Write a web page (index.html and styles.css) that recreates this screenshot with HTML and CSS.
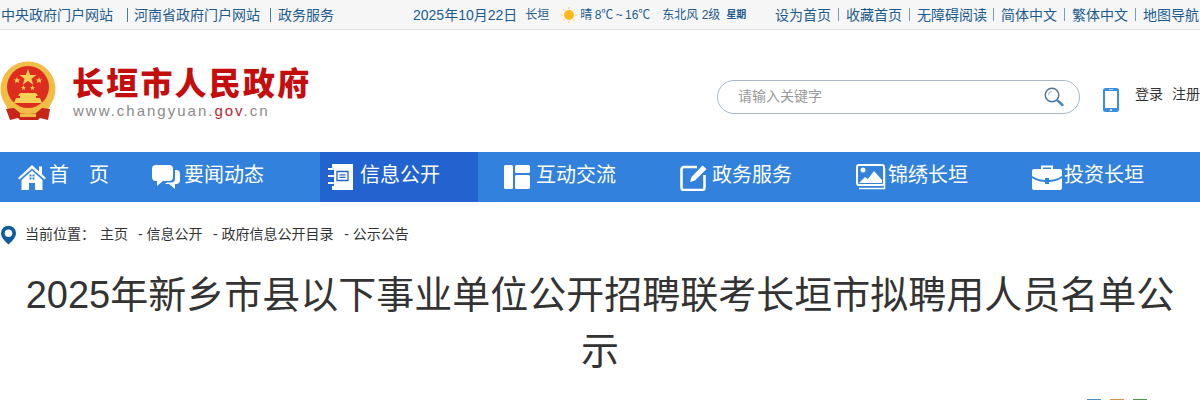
FILE: index.html
```html
<!DOCTYPE html>
<html lang="zh-CN">
<head>
<meta charset="utf-8">
<title>长垣市人民政府</title>
<link rel="stylesheet" href="styles.css">
</head>
<body>
<div class="topbar">
  <div class="top-left">
    <a class="l1">中央政府门户网站</a><i class="bar b1"></i><a class="l2">河南省政府门户网站</a><i class="bar b2"></i><a class="l2">政务服务</a>
  </div>
  <div class="top-mid">
    <span class="date">2025年10月22日</span>
    <span class="city">长垣</span>
    <svg class="sun" viewBox="0 0 16 16"><circle cx="8" cy="8" r="5" fill="#ffb81c"/><path d="M8 0v2M8 14v2M0 8h2M14 8h2M2.300 2.300l1.400 1.400M12.300 12.300l1.400 1.400M2.300 13.700l1.400-1.400M12.300 3.700l1.400-1.400" stroke="#ffc95a" stroke-width="1"/></svg>
    <span class="temp">晴 8℃ ~ 16℃</span>
    <span class="wind">东北风 2级</span>
    <b class="week">星期</b>
  </div>
  <div class="top-right">
    <a>设为首页</a><i class="sep"></i><a>收藏首页</a><i class="sep"></i><a class="snug">无障碍阅读</a><i class="sep"></i><a>简体中文</a><i class="sep"></i><a>繁体中文</a><i class="sep"></i><a>地图导航</a>
  </div>
</div>

<header class="head">
  <div class="logo">
    <svg class="emblem" viewBox="0 0 56 60">
      <circle cx="28" cy="28" r="27.500" fill="#f0bd45"/>
      <circle cx="28" cy="26" r="21" fill="#de2c20"/>
      <path d="M28 8l2.200 6h6.300l-5.100 3.700 1.900 6-5.300-3.700-5.300 3.700 1.900-6-5.100-3.700h6.300z" fill="#f6cf55"/>
      <path d="M17 16l.9 2.400h2.500l-2 1.500.7 2.400-2.100-1.500-2.100 1.500.7-2.400-2-1.500h2.500zM39 16l.9 2.400h2.500l-2 1.500.7 2.400-2.100-1.500-2.100 1.500.7-2.400-2-1.500h2.500zM23.500 24l.7 1.900h2l-1.600 1.200.6 2-1.700-1.200-1.700 1.200.6-2-1.600-1.200h2zM32.500 24l.7 1.900h2l-1.600 1.200.6 2-1.700-1.200-1.700 1.200.6-2-1.600-1.200h2z" fill="#f6cf55"/>
      <path d="M20 32h16l2 3h-2v2h4l2 5H14l2-5h4v-2h-2z" fill="#f6cf55"/>
      <path d="M9 42c5 6 12 8 19 8s14-2 19-8l3 3c-4 8-13 11-22 11S10 53 6 45z" fill="#f0bd45"/>
      <path d="M6 48l8-1 6 5 8 1 8-1 6-5 8 1-2 11-8-2-2 2H20l-2-2-8 2z" fill="#c8241a"/>
      <path d="M20 52.500h16V56H20z" fill="#f0bd45"/>
    </svg>
    <div class="logo-text">
      <div class="logo-name">长垣市人民政府</div>
      <div class="logo-url">www.changyuan.<em>gov</em>.cn</div>
    </div>
  </div>
  <div class="tools">
    <div class="search">
      <span class="placeholder">请输入关键字</span>
      <svg class="search-icon" viewBox="0 0 20 20"><circle cx="8" cy="8" r="6.800" fill="none" stroke="#4a7498" stroke-width="1.400"/><path d="M4.500 8a3.500 3.500 0 0 1 3.500-3.500" fill="none" stroke="#8fb0cc" stroke-width="1"/><path d="M13.500 13.500l5 4.500" stroke="#4d86bd" stroke-width="2.400" stroke-linecap="round"/></svg>
    </div>
    <svg class="phone" viewBox="0 0 16 24"><rect width="16" height="24" rx="2.500" fill="#3c8ee3"/><rect x="2" y="3" width="12" height="17" fill="#fff"/><rect x="6" y="1.200" width="4" height=".8" fill="#cfe3f8"/><circle cx="8" cy="22" r="1" fill="#fff"/></svg>
    <a class="user first">登录</a><a class="user">注册</a>
  </div>
</header>

<nav class="nav">
  <a class="item w1">
    <svg class="ic" viewBox="0 0 28 28"><path d="M14 2L0 15l1.500 1.500L14 5.500l12.500 11L28 15l-4-3.700V3.500h-3v5z" fill="#fff"/><path d="M14 7.500L3.500 17v10h7.500v-7h6v7h7.500V17z" fill="#fff"/><path d="M11.500 11.500h2v2h-2zM14.500 11.500h2v2h-2zM11.500 14.500h2v2h-2zM14.500 14.500h2v2h-2z" fill="#3282dd"/></svg>
    <span class="t home">首<span class="gap"></span>页</span>
  </a>
  <a class="item w2">
    <svg class="ic" viewBox="0 0 28 26"><rect y="1" width="21" height="16" rx="4" fill="#fff"/><path d="M5 16v6l7-6z" fill="#fff"/><path d="M23 6h1a4 4 0 0 1 4 4v6a4 4 0 0 1-4 4h-1v5l-6-5h-4l2-1.500h4a4 4 0 0 0 4-4z" fill="#fff"/></svg>
    <span class="t">要闻动态</span>
  </a>
  <a class="item w3 active">
    <svg class="ic" viewBox="0 0 26 28"><path d="M4 1h21v26H4v-4h19V3H6v2H4z" fill="#fff"/><rect x="6" y="3" width="17" height="20" fill="#fff"/><path d="M9 8.500h11v9H9z" fill="none" stroke="#2263cf" stroke-width="1.300"/><path d="M11.500 11.800h6M11.500 14.300h6" stroke="#2263cf" stroke-width="1.200"/><path d="M0 6h5M0 13h5M0 20h5" stroke="#fff" stroke-width="2.200" stroke-linecap="round"/></svg>
    <span class="t">信息公开</span>
  </a>
  <a class="item w4">
    <svg class="ic" viewBox="0 0 26 24"><rect width="9" height="24" rx="1.500" fill="#fff"/><rect x="11" width="15" height="8" rx="1.500" fill="#fff"/><rect x="11" y="10" width="15" height="14" rx="1.500" fill="#fff"/></svg>
    <span class="t">互动交流</span>
  </a>
  <a class="item w5">
    <svg class="ic" viewBox="0 0 28 28"><path d="M17 4H4a2.500 2.500 0 0 0-2.500 2.500v18A2.500 2.500 0 0 0 4 27h18a2.500 2.500 0 0 0 2.500-2.500V12" fill="none" stroke="#fff" stroke-width="2.600"/><path d="M10 19l1.500-5L22.500 2.500l4 3.500L15 17.500z" fill="#fff"/></svg>
    <span class="t">政务服务</span>
  </a>
  <a class="item w6">
    <svg class="ic wide" viewBox="0 0 30 26"><rect x="1" y="1" width="27" height="20" rx="2" fill="none" stroke="#fff" stroke-width="2"/><path d="M3 24.500h25.500V4" fill="none" stroke="#fff" stroke-width="1.500"/><circle cx="7" cy="6" r="2.500" fill="#fff"/><path d="M3 19l6-6 3 2 6-8 8 9v3z" fill="#fff"/></svg>
    <span class="t tight">锦绣长垣</span>
  </a>
  <a class="item w7">
    <svg class="ic wide" viewBox="0 0 30 26"><path d="M10 6V2.500h10V6" fill="none" stroke="#fff" stroke-width="2"/><path d="M2 5h26a2 2 0 0 1 2 2v5c-5 3-10 4-13 4v-2h-4v2c-3 0-8-1-13-4V7a2 2 0 0 1 2-2z" fill="#fff"/><path d="M0 14c5 3 10 4 13 4v2h4v-2c3 0 8-1 13-4v10a2 2 0 0 1-2 2H2a2 2 0 0 1-2-2z" fill="#fff"/></svg>
    <span class="t tight">投资长垣</span>
  </a>
</nav>

<div class="crumb">
  <svg class="pin" viewBox="0 0 16 20"><path d="M8 0a8 8 0 0 1 8 8c0 5-5 9-8 12C5 17 0 13 0 8a8 8 0 0 1 8-8z" fill="#0f5c9c"/><circle cx="8" cy="8" r="4" fill="#fff"/></svg>
  <span class="here">当前位置：</span>
  <a class="c0">主页</a>
  <a class="c1">- 信息公开</a>
  <a class="c1">- 政府信息公开目录</a>
  <a class="c1">- 公示公告</a>
</div>

<h1 class="title">2025年新乡市县以下事业单位公开招聘联考长垣市拟聘用人员名单公示</h1>

<div class="share">
  <i class="dot blue"></i><i class="dot orange"></i><i class="dot green"></i>
</div>
</body>
</html>
```
FILE: styles.css
```css
* { box-sizing: border-box; }
html, body { margin: 0; padding: 0; height: 400px; overflow: hidden; }
body { background: #fff; font-family: "Liberation Sans", "Noto Sans CJK SC", sans-serif; color: #333; }
a { color: inherit; text-decoration: none; }

.topbar { display: flex; height: 30px; background: #f6f6f6; border-bottom: 1px solid #e2e2e2; font-size: 14px; line-height: 28px; color: #1d5b8f; white-space: nowrap; }
.top-left { display: flex; align-items: center; width: 413px; padding-left: 1px; }
.bar { width: 1px; height: 14px; background: #3f7cab; }
.b1 { margin: 0 6px 0 14px; }
.b2 { margin: 0 7px 0 10px; }
.top-mid { display: flex; align-items: center; width: 362px; font-size: 12px; }
.date { font-size: 14px; margin-right: 8px; }
.sun { width: 16px; height: 16px; margin: 0 3px 0 12px; }
.temp { word-spacing: -1px; }
.wind { margin-left: 12px; }
.week { font-size: 10px; margin-left: 6px; }
.top-right { display: flex; align-items: center; }
.sep { width: 1px; height: 13px; background: #7a9cb8; margin: 0 7px; }
.snug { margin-right: -1px; }

.head { display: flex; justify-content: space-between; height: 122px; padding-top: 31px; }
.logo { display: flex; }
.emblem { width: 56px; height: 60px; margin-right: 17px; }
.logo-text { padding-top: 4px; }
.logo-name { font-size: 32px; line-height: 38px; font-weight: 900; color: #c40d0d; letter-spacing: 2.200px; margin-left: -1px; white-space: nowrap; }
.logo-url { font-size: 15px; line-height: 20px; color: #8a8a8a; letter-spacing: 2px; margin-top: -2px; }
.logo-url em { font-style: normal; color: #b5272d; }
.tools { display: flex; align-items: flex-start; padding-top: 19px; font-size: 14px; }
.search { display: flex; align-items: center; justify-content: space-between; width: 363px; height: 34px; padding: 0 15px 0 20px; border: 1px solid #a8b8c8; border-radius: 17px; }
.placeholder { font-size: 14px; color: #999; margin-bottom: 4px; }
.search-icon { width: 20px; height: 20px; }
.phone { width: 16px; height: 24px; margin: 8px 16px 0 23px; }
.user { line-height: 28px; white-space: nowrap; }
.user.first { margin-right: 9px; }

.nav { display: flex; height: 50px; background: #3282dd; color: #fff; font-size: 20px; }
.item { display: flex; align-items: center; height: 50px; }
.w1 { width: 134px; padding-left: 18px; }
.w2 { width: 186px; padding-left: 18px; }
.w3 { width: 158px; padding-left: 8px; }
.w4 { width: 202px; padding-left: 26px; }
.w5 { width: 176px; }
.w6 { width: 176px; }
.w7 { width: 168px; }
.w3.active { background: #2263cf; }
.ic { width: 28px; height: 28px; margin-right: 4px; flex: none; }
.w1 .ic { margin-right: 3px; }
.w3 .ic { width: 26px; margin-right: 6px; }
.w4 .ic { width: 26px; height: 24px; margin-right: 6px; }
.wide { width: 30px; height: 26px; margin-right: 2px; }
.gap { display: inline-block; width: 20px; }
.t { position: relative; top: -4px; white-space: nowrap; }

.crumb { display: flex; align-items: center; height: 65px; font-size: 14px; color: #333; white-space: nowrap; padding: 0 0 4px 1px; }
.pin { width: 15px; height: 20px; margin: 4px 9px 0 0; }
.here { margin-right: 5px; }
.c0 { margin-right: 10px; }
.c1 { margin-right: 10.500px; }

.title { margin: 0; padding: 0 20px; font-size: 38px; line-height: 56px; font-weight: 400; text-align: center; color: #333; }

.share { display: flex; gap: 9px; padding: 20px 0 0 1087px; }
.dot { display: block; width: 14px; height: 14px; border-top: 1px solid; }
.blue { color: #4a90c8; }
.orange { color: #d9924a; }
.green { color: #4d9a4d; }
```
